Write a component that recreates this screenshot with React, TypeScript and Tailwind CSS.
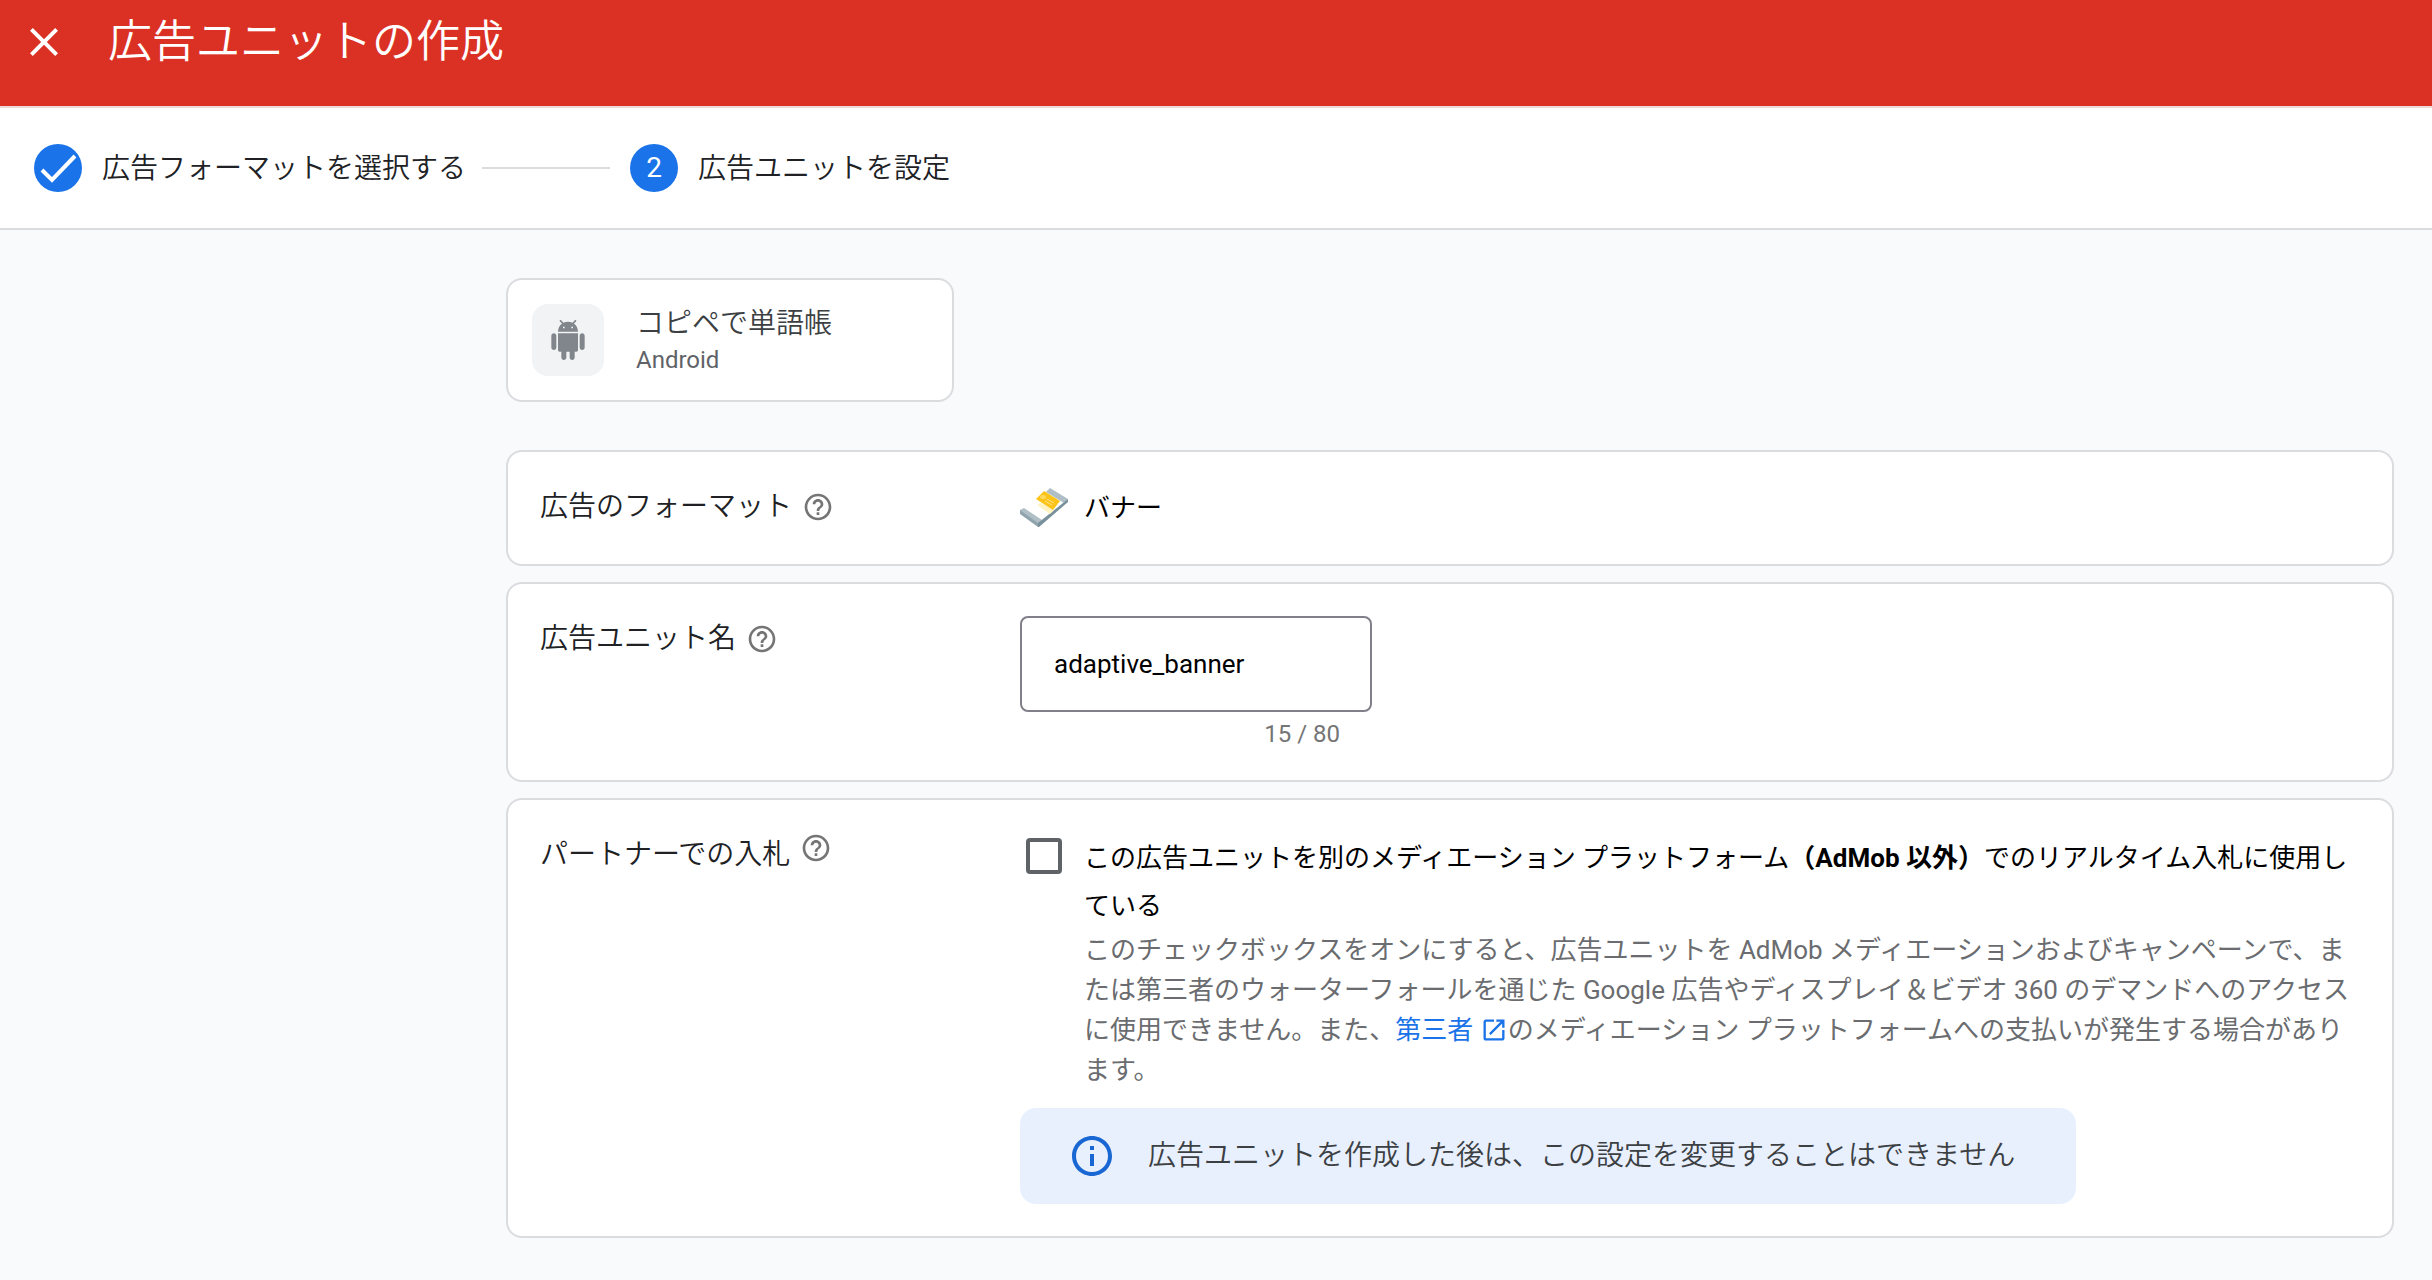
import React, { useState } from 'react';

const MAX_NAME_LENGTH = 80;

const HelpIcon: React.FC = () => (
  <svg viewBox="0 0 24 24" className="h-8 w-8 shrink-0 fill-[#757575]" aria-hidden="true">
    <path d="M11 18h2v-2h-2v2zm1-16C6.48 2 2 6.48 2 12s4.48 10 10 10 10-4.48 10-10S17.52 2 12 2zm0 18c-4.41 0-8-3.59-8-8s3.59-8 8-8 8 3.59 8 8-3.59 8-8 8zm0-14c-2.21 0-4 1.79-4 4h2c0-1.1.9-2 2-2s2 .9 2 2c0 2-3 1.75-3 5h2c0-2.25 3-2.5 3-5 0-2.21-1.79-4-4-4z" />
  </svg>
);

const AndroidIcon: React.FC = () => (
  <svg viewBox="0 0 24 24" className="h-10 w-10 fill-[#80868b]" aria-hidden="true">
    <path d="M6 18c0 .55.45 1 1 1h1v3.5c0 .83.67 1.5 1.5 1.5s1.5-.67 1.5-1.5V19h2v3.5c0 .83.67 1.5 1.5 1.5s1.5-.67 1.5-1.5V19h1c.55 0 1-.45 1-1V8H6v10zM3.500 8C2.670 8 2 8.670 2 9.500v7c0 .83.67 1.500 1.500 1.500S5 17.330 5 16.500v-7C5 8.670 4.330 8 3.500 8zm17 0c-.83 0-1.500.67-1.500 1.500v7c0 .83.67 1.500 1.500 1.500s1.500-.67 1.500-1.500v-7c0-.83-.67-1.500-1.500-1.500zm-4.970-5.840 1.300-1.300c.2-.2.2-.51 0-.71-.2-.2-.51-.2-.71 0l-1.480 1.480C13.850 1.230 12.950 1 12 1c-.96 0-1.860.23-2.660.63L7.850.15c-.2-.2-.51-.2-.71 0-.2.2-.2.51 0 .71l1.310 1.310C6.970 3.260 6 5.010 6 7h12c0-1.990-.97-3.750-2.470-4.840zM10 5H9V4h1v1zm5 0h-1V4h1v1z" />
  </svg>
);

const BannerIcon: React.FC = () => (
  <svg viewBox="0 0 48 40" className="h-10 w-12 shrink-0" aria-hidden="true">
    <path d="M27 2 48 11 19 36 1 21Z" fill="#fff" />
    <path d="M30 0 48 11 44 15 26 4Z" fill="#b0bec5" />
    <path d="M4 20 22 32 18 36 0 24V22Z" fill="#b0bec5" />
    <path d="M0 22 18 35V39L0 26Z" fill="#90a4ae" />
    <path d="M48 11V14L19 39H18V35Z" fill="#78909c" />
    <path d="M30 26 34 22 21 15 17 17Z" fill="#fff3c4" />
    <path d="M24 3 40 13 33 22 16 11Z" fill="#fcc419" />
    <ellipse cx="23" cy="9" rx="3" ry="2" fill="#ffd95a" />
    <path d="M27 11 34 15M25 13 32 17" stroke="#ffe08a" strokeWidth="1" />
  </svg>
);

const OpenInNewIcon: React.FC = () => (
  <svg viewBox="0 0 24 24" className="inline h-7 w-7 fill-[#1a73e8] align-[-5px]" aria-hidden="true">
    <path d="M19 19H5V5h7V3H5c-1.11 0-2 .9-2 2v14c0 1.1.89 2 2 2h14c1.1 0 2-.9 2-2v-7h-2v7zM14 3v2h3.590l-9.830 9.830 1.410 1.410L19 6.410V10h2V3h-7z" />
  </svg>
);

const Header: React.FC = () => (
  <header className="flex h-[108px] items-start border-b-2 border-[#ecd9d8] bg-[#db3125] pl-5 pt-[18px] text-white">
    <button type="button" aria-label="閉じる" className="h-12 w-12">
      <svg viewBox="0 0 24 24" className="h-12 w-12 fill-white" aria-hidden="true">
        <path d="M19 6.410 17.590 5 12 10.590 6.410 5 5 6.410 10.590 12 5 17.590 6.410 19 12 13.410 17.590 19 19 17.590 13.410 12z" />
      </svg>
    </button>
    <h1 className="ml-10 text-[44px] leading-[48px] font-[350]">広告ユニットの作成</h1>
  </header>
);

const Stepper: React.FC = () => (
  <ol className="flex h-[122px] items-center border-b-2 border-[#dadce0] bg-white pl-[34px] text-[28px] text-[#202124]">
    <li className="flex items-center">
      <span className="flex h-12 w-12 items-center justify-center rounded-full bg-[#1a73e8]">
        <svg viewBox="0 0 48 48" className="h-12 w-12" aria-hidden="true">
          <path d="M8 26 18 36 41 12" fill="none" stroke="#fff" strokeWidth="4" />
        </svg>
      </span>
      <span className="ml-5 pt-[2px] font-[350]">広告フォーマットを選択する</span>
    </li>
    <li aria-hidden="true" className="mr-5 ml-4 h-[2px] w-32 bg-[#dadce0]" />
    <li className="flex items-center" aria-current="step">
      <span className="flex h-12 w-12 items-center justify-center rounded-full bg-[#1a73e8] text-white">2</span>
      <span className="ml-5 pt-[2px] font-[350]">広告ユニットを設定</span>
    </li>
  </ol>
);

interface RowProps {
  label: React.ReactNode;
  children: React.ReactNode;
}

const Row: React.FC<RowProps> = ({ label, children }) => (
  <section className="flex rounded-2xl border-2 border-[#dadce0] bg-white px-8 py-8">
    <div className="w-[480px] shrink-0 text-[28px] leading-[46px] font-[350] text-[#202124]">{label}</div>
    <div className="min-w-0 flex-1">{children}</div>
  </section>
);

const App: React.FC = () => {
  const [name, setName] = useState('adaptive_banner');
  const [partnerBidding, setPartnerBidding] = useState(false);

  return (
    <div
      lang="ja"
      className="min-h-screen bg-[#f8fafc] font-[Roboto,'Noto_Sans_CJK_JP',sans-serif]"
    >
      <Header />
      <Stepper />

      <main className="pt-12 pr-[38px] pb-10 pl-[506px]">
        <div className="flex w-[448px] items-center gap-8 rounded-2xl border-2 border-[#dadce0] bg-white p-6">
          <div className="flex h-[72px] w-[72px] shrink-0 items-center justify-center rounded-2xl bg-[#f1f3f4]">
            <AndroidIcon />
          </div>
          <div>
            <p className="text-[28px] leading-10 font-[350] text-[#3c4043]">コピペで単語帳</p>
            <p className="text-2xl leading-8 text-[#5f6368]">Android</p>
          </div>
        </div>

        <form className="mt-12 space-y-4" onSubmit={(e) => e.preventDefault()}>
          <Row
            label={
              <div className="flex items-center gap-[10px]">
                広告のフォーマット
                <HelpIcon />
              </div>
            }
          >
            <div className="flex h-12 items-center gap-4 text-[26px] text-black">
              <BannerIcon />
              バナー
            </div>
          </Row>

          <Row
            label={
              <div className="flex items-center gap-[10px]">
                <label htmlFor="unit-name">広告ユニット名</label>
                <HelpIcon />
              </div>
            }
          >
            <div className="w-[352px]">
              <input
                id="unit-name"
                type="text"
                value={name}
                maxLength={MAX_NAME_LENGTH}
                onChange={(e) => setName(e.target.value)}
                className="block h-24 w-full rounded-lg border-2 border-[#80808a] bg-white px-8 text-[26px] text-black outline-none"
              />
              <p className="mt-2 pr-8 text-right text-2xl leading-7 text-[#757575]">
                {name.length} / {MAX_NAME_LENGTH}
              </p>
            </div>
          </Row>

          <Row
            label={
              <div className="flex items-start gap-[10px]">
                パートナーでの入札
                <HelpIcon />
              </div>
            }
          >
            <div className="flex items-start gap-[22px] pt-[2px]">
              <input
                id="partner-bidding"
                type="checkbox"
                checked={partnerBidding}
                onChange={(e) => setPartnerBidding(e.target.checked)}
                className="mt-1 ml-[6px] h-9 w-9 shrink-0 appearance-none rounded border-4 border-[#5f6368] bg-white checked:bg-[#1a73e8]"
              />
              <div className="flex-1 text-[26px]">
                <label htmlFor="partner-bidding" className="block leading-[48px] text-black">
                  この広告ユニットを別のメディエーション プラットフォーム<b className="font-bold">（AdMob 以外）</b>でのリアルタイム入札に使用している
                </label>
                <p className="leading-10 text-[#6a6c6f]">
                  このチェックボックスをオンにすると、広告ユニットを AdMob メディエーションおよびキャンペーンで、または第三者のウォーターフォールを通じた Google 広告やディスプレイ＆ビデオ 360 のデマンドへのアクセスに使用できません。また、
                  <a href="#third-party" className="text-[#1a73e8]">第三者 <OpenInNewIcon /></a>
                  のメディエーション プラットフォームへの支払いが発生する場合があります。
                </p>
              </div>
            </div>
            <div className="mt-[18px] flex h-24 w-full max-w-[1056px] items-center gap-8 rounded-2xl bg-[#e8f0fe] px-12 text-[28px] font-[350] text-[#3c4043]">
              <svg viewBox="0 0 24 24" className="h-12 w-12 shrink-0 fill-[#1967d2]" aria-hidden="true">
                <path d="M11 7h2v2h-2zm0 4h2v6h-2zm1-9C6.480 2 2 6.480 2 12s4.480 10 10 10 10-4.480 10-10S17.520 2 12 2zm0 18c-4.410 0-8-3.590-8-8s3.590-8 8-8 8 3.590 8 8-3.590 8-8 8z" />
              </svg>
              広告ユニットを作成した後は、この設定を変更することはできません
            </div>
          </Row>
        </form>
      </main>
    </div>
  );
};

export default App;
